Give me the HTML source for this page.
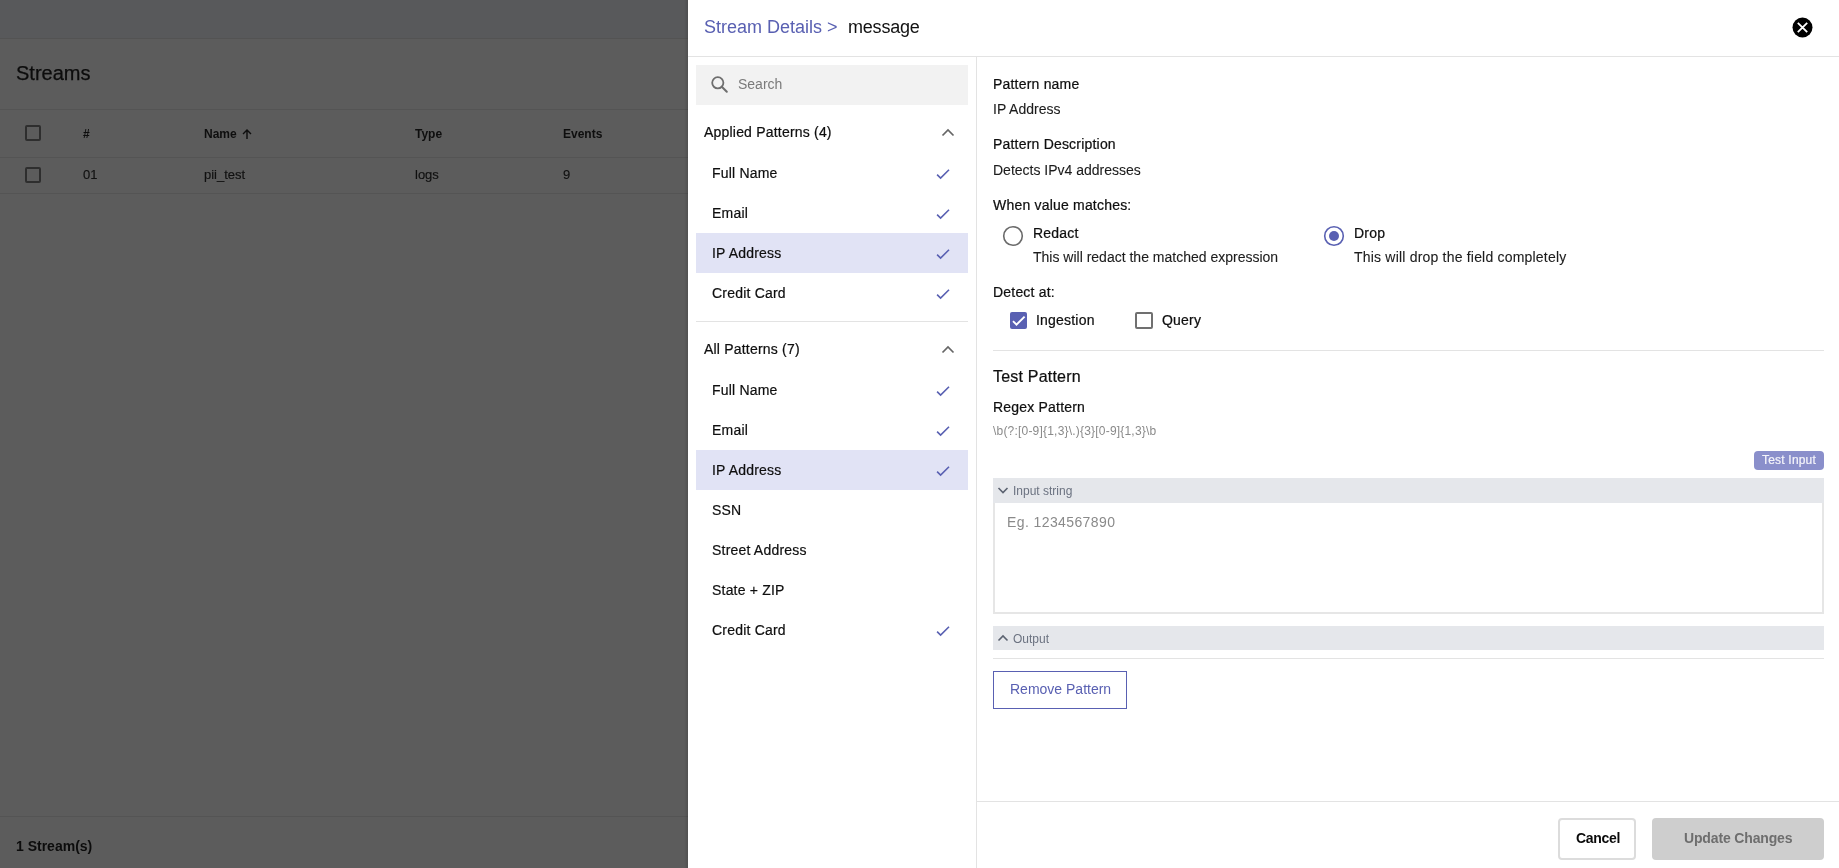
<!DOCTYPE html>
<html><head><meta charset="utf-8">
<style>
*{box-sizing:border-box;margin:0;padding:0}
html,body{-webkit-font-smoothing:antialiased;width:1839px;height:868px;overflow:hidden;background:#5c5c5c;font-family:"Liberation Sans",sans-serif;color:#000}
.a{position:absolute;white-space:pre}
.t14{font-size:14px;line-height:14px}
.t12{font-size:12px;line-height:12px}
.t13{font-size:13px;line-height:13px}
.ln{position:absolute;height:1px}
.sb{-webkit-text-stroke:0.22px currentColor;letter-spacing:0.2px}
.md{-webkit-text-stroke:0.2px currentColor;letter-spacing:0.2px}
#left{position:absolute;left:0;top:0;width:688px;height:868px;background:#5c5c5c;overflow:hidden}
#drawer{position:absolute;left:688px;top:0;width:1151px;height:868px;background:#fff}
</style></head><body><div id="root" style="position:absolute;left:0;top:0;width:1839px;height:868px;will-change:transform">
<div id="left">
  <div class="a" style="left:0;top:0;width:688px;height:38px;background:#58595b"></div>
  <div class="ln" style="left:0;top:38px;width:688px;background:#535353"></div>
  <div class="a" style="left:16px;top:63px;font-size:20px;line-height:20px;color:#0c0c0c;-webkit-text-stroke:0.25px #0c0c0c">Streams</div>
  <div class="ln" style="left:0;top:109px;width:688px;background:#545454"></div>
  <div class="a" style="left:25px;top:125px;width:16px;height:16px;border:2px solid #2e2e2e;border-radius:2px"></div>
  <div class="a t12" style="left:83px;top:128px;font-weight:bold;color:#0e0e0e">#</div>
  <div class="a t12" style="left:204px;top:128px;font-weight:bold;color:#0e0e0e">Name</div>
  <svg class="a" style="left:241px;top:128px" width="12" height="12" viewBox="0 0 12 12"><path d="M6 11V2M2 6l4-4 4 4" stroke="#0e0e0e" stroke-width="1.4" fill="none"/></svg>
  <div class="a t12" style="left:415px;top:128px;font-weight:bold;color:#0e0e0e">Type</div>
  <div class="a t12" style="left:563px;top:128px;font-weight:bold;color:#0e0e0e">Events</div>
  <div class="ln" style="left:0;top:157px;width:688px;background:#545454"></div>
  <div class="a" style="left:25px;top:167px;width:16px;height:16px;border:2px solid #2e2e2e;border-radius:2px"></div>
  <div class="a t13" style="left:83px;top:168px;color:#111;-webkit-text-stroke:0.15px #111">01</div>
  <div class="a t13" style="left:204px;top:168px;color:#111;-webkit-text-stroke:0.15px #111">pii_test</div>
  <div class="a t13" style="left:415px;top:168px;color:#111;-webkit-text-stroke:0.15px #111">logs</div>
  <div class="a t13" style="left:563px;top:168px;color:#111;-webkit-text-stroke:0.15px #111">9</div>
  <div class="ln" style="left:0;top:193px;width:688px;background:#545454"></div>
  <div class="ln" style="left:0;top:816px;width:688px;background:#545454"></div>
  <div class="a t14" style="left:16px;top:839px;font-weight:bold;color:#0c0c0c">1 Stream(s)</div>
  <div class="a" style="left:684px;top:0;width:4px;height:868px;background:linear-gradient(to right,rgba(0,0,0,0),rgba(0,0,0,0.12))"></div>
</div>
<div id="drawer"></div>
<!-- header -->
<div class="a" style="left:704px;top:18px;font-size:18px;line-height:18px;color:#5960b2">Stream Details &gt;</div>
<div class="a" style="left:848px;top:18px;font-size:18px;line-height:18px;color:#111;letter-spacing:-0.2px">message</div>
<svg class="a" style="left:1792px;top:17px" width="21" height="21" viewBox="0 0 21 21"><circle cx="10.5" cy="10.5" r="10" fill="#000"/><path d="M5.8 5.8l9.4 9.4M15.2 5.8l-9.4 9.4" stroke="#fff" stroke-width="1.8"/></svg>
<div class="ln" style="left:688px;top:56px;width:1151px;background:#e3e3e3"></div>
<!-- left column -->
<div class="a" style="left:976px;top:57px;width:1px;height:811px;background:#e3e3e3"></div>
<div class="a" style="left:696px;top:65px;width:272px;height:40px;background:#f2f2f2"></div>
<svg class="a" style="left:710px;top:75px" width="20" height="20" viewBox="0 0 20 20"><circle cx="7.8" cy="7.8" r="5.6" stroke="#6e6e6e" stroke-width="1.8" fill="none"/><path d="M11.8 11.8l5 5" stroke="#6e6e6e" stroke-width="2" stroke-linecap="round" fill="none"/></svg>
<div class="a t14" style="left:738px;top:77px;color:#7a7a7a">Search</div>
<div class="a t14 sb" style="left:704px;top:125px;color:#0f0f0f">Applied Patterns (4)</div>
<svg class="a" style="left:940px;top:126px" width="16" height="12" viewBox="0 0 16 12"><path d="M2.5 9.5L8 4l5.5 5.5" stroke="#666" stroke-width="1.7" fill="none"/></svg>
<div class="a t14 md" style="left:712px;top:166px;color:#0f0f0f">Full Name</div>
<svg class="a" style="left:935px;top:168px" width="16" height="12" viewBox="0 0 16 12"><path d="M2.1 6.6L5.6 10.1 14 1.7" stroke="#5960b2" stroke-width="1.6" fill="none"/></svg>
<div class="a t14 md" style="left:712px;top:206px;color:#0f0f0f">Email</div>
<svg class="a" style="left:935px;top:208px" width="16" height="12" viewBox="0 0 16 12"><path d="M2.1 6.6L5.6 10.1 14 1.7" stroke="#5960b2" stroke-width="1.6" fill="none"/></svg>
<div class="a" style="left:696px;top:233px;width:272px;height:40px;background:#e1e3f5"></div>
<div class="a t14 md" style="left:712px;top:246px;color:#0f0f0f">IP Address</div>
<svg class="a" style="left:935px;top:248px" width="16" height="12" viewBox="0 0 16 12"><path d="M2.1 6.6L5.6 10.1 14 1.7" stroke="#5960b2" stroke-width="1.6" fill="none"/></svg>
<div class="a t14 md" style="left:712px;top:286px;color:#0f0f0f">Credit Card</div>
<svg class="a" style="left:935px;top:288px" width="16" height="12" viewBox="0 0 16 12"><path d="M2.1 6.6L5.6 10.1 14 1.7" stroke="#5960b2" stroke-width="1.6" fill="none"/></svg>
<div class="ln" style="left:696px;top:321px;width:272px;background:#e3e3e3"></div>
<div class="a t14 sb" style="left:704px;top:342px;color:#0f0f0f">All Patterns (7)</div>
<svg class="a" style="left:940px;top:343px" width="16" height="12" viewBox="0 0 16 12"><path d="M2.5 9.5L8 4l5.5 5.5" stroke="#666" stroke-width="1.7" fill="none"/></svg>
<div class="a t14 md" style="left:712px;top:383px;color:#0f0f0f">Full Name</div>
<svg class="a" style="left:935px;top:385px" width="16" height="12" viewBox="0 0 16 12"><path d="M2.1 6.6L5.6 10.1 14 1.7" stroke="#5960b2" stroke-width="1.6" fill="none"/></svg>
<div class="a t14 md" style="left:712px;top:423px;color:#0f0f0f">Email</div>
<svg class="a" style="left:935px;top:425px" width="16" height="12" viewBox="0 0 16 12"><path d="M2.1 6.6L5.6 10.1 14 1.7" stroke="#5960b2" stroke-width="1.6" fill="none"/></svg>
<div class="a" style="left:696px;top:450px;width:272px;height:40px;background:#e1e3f5"></div>
<div class="a t14 md" style="left:712px;top:463px;color:#0f0f0f">IP Address</div>
<svg class="a" style="left:935px;top:465px" width="16" height="12" viewBox="0 0 16 12"><path d="M2.1 6.6L5.6 10.1 14 1.7" stroke="#5960b2" stroke-width="1.6" fill="none"/></svg>
<div class="a t14 md" style="left:712px;top:503px;color:#0f0f0f">SSN</div>
<div class="a t14 md" style="left:712px;top:543px;color:#0f0f0f">Street Address</div>
<div class="a t14 md" style="left:712px;top:583px;color:#0f0f0f">State + ZIP</div>
<div class="a t14 md" style="left:712px;top:623px;color:#0f0f0f">Credit Card</div>
<svg class="a" style="left:935px;top:625px" width="16" height="12" viewBox="0 0 16 12"><path d="M2.1 6.6L5.6 10.1 14 1.7" stroke="#5960b2" stroke-width="1.6" fill="none"/></svg>
<!-- right content -->
<div class="a t14 sb" style="left:993px;top:77px;color:#0f0f0f">Pattern name</div>
<div class="a t14" style="left:993px;top:102px;color:#1c1c1c;-webkit-text-stroke:0.1px #1c1c1c">IP Address</div>
<div class="a t14 sb" style="left:993px;top:137px;color:#0f0f0f">Pattern Description</div>
<div class="a t14" style="left:993px;top:163px;color:#1c1c1c;-webkit-text-stroke:0.1px #1c1c1c">Detects IPv4 addresses</div>
<div class="a t14 sb" style="left:993px;top:198px;color:#0f0f0f">When value matches:</div>
<svg class="a" style="left:1002px;top:225px" width="22" height="22" viewBox="0 0 22 22"><circle cx="11" cy="11" r="9.3" stroke="#6a6a6a" stroke-width="1.6" fill="none"/></svg>
<div class="a t14 sb" style="left:1033px;top:226px;color:#0f0f0f">Redact</div>
<div class="a t14" style="left:1033px;top:250px;color:#1c1c1c;-webkit-text-stroke:0.1px #1c1c1c">This will redact the matched expression</div>
<svg class="a" style="left:1323px;top:225px" width="22" height="22" viewBox="0 0 22 22"><circle cx="11" cy="11" r="9.3" stroke="#5960b2" stroke-width="1.6" fill="none"/><circle cx="11" cy="11" r="5" fill="#5960b2"/></svg>
<div class="a t14 sb" style="left:1354px;top:226px;color:#0f0f0f">Drop</div>
<div class="a t14" style="left:1354px;top:250px;color:#1c1c1c;-webkit-text-stroke:0.1px #1c1c1c;letter-spacing:0.2px">This will drop the field completely</div>
<div class="a t14 sb" style="left:993px;top:285px;color:#0f0f0f">Detect at:</div>
<div class="a" style="left:1010px;top:312px;width:17px;height:17px;background:#5960b2;border-radius:2px"></div>
<svg class="a" style="left:1010px;top:312px" width="17" height="17" viewBox="0 0 17 17"><path d="M3 9.2L6.5 12.7 14.6 4.6" stroke="#fff" stroke-width="1.9" fill="none"/></svg>
<div class="a t14 sb" style="left:1036px;top:313px;color:#0f0f0f">Ingestion</div>
<div class="a" style="left:1135px;top:312px;width:18px;height:17px;border:2px solid #707070;border-radius:2px"></div>
<div class="a t14 sb" style="left:1162px;top:313px;color:#0f0f0f">Query</div>
<div class="ln" style="left:993px;top:350px;width:831px;background:#e3e3e3"></div>
<div class="a sb" style="left:993px;top:369px;font-size:16px;line-height:16px;color:#0f0f0f">Test Pattern</div>
<div class="a t14 sb" style="left:993px;top:400px;color:#0f0f0f">Regex Pattern</div>
<div class="a t12" style="left:993px;top:425px;color:#8a8a8a;letter-spacing:0.2px">\b(?:[0-9]{1,3}\.){3}[0-9]{1,3}\b</div>
<div class="a" style="left:1754px;top:451px;width:70px;height:19px;background:#8a8fcb;border-radius:4px"></div>
<div class="a t12 sb" style="left:1762px;top:454px;color:#f4f4fa">Test Input</div>
<div class="a" style="left:993px;top:478px;width:831px;height:25px;background:#e5e7eb"></div>
<svg class="a" style="left:996px;top:484px" width="14" height="12" viewBox="0 0 14 12"><path d="M2.5 4l4.5 4.5L11.5 4" stroke="#5b6270" stroke-width="1.6" fill="none"/></svg>
<div class="a t12" style="left:1013px;top:485px;color:#6b7280">Input string</div>
<div class="a" style="left:993px;top:503px;width:831px;height:111px;border:2px solid #e6e6e6;border-top:none"></div>
<div class="a t14" style="left:1007px;top:515px;color:#8a8a8a;letter-spacing:0.4px">Eg. 1234567890</div>
<div class="a" style="left:993px;top:626px;width:831px;height:24px;background:#e5e7eb"></div>
<svg class="a" style="left:996px;top:632px" width="14" height="12" viewBox="0 0 14 12"><path d="M2.5 8.5L7 4l4.5 4.5" stroke="#5b6270" stroke-width="1.6" fill="none"/></svg>
<div class="a t12" style="left:1013px;top:633px;color:#6b7280">Output</div>
<div class="ln" style="left:993px;top:658px;width:831px;background:#e3e3e3"></div>
<div class="a" style="left:993px;top:671px;width:134px;height:38px;border:1px solid #5960b2"></div>
<div class="a t14" style="left:1010px;top:682px;color:#5960b2">Remove Pattern</div>
<!-- footer -->
<div class="ln" style="left:977px;top:801px;width:862px;background:#e3e3e3"></div>
<div class="a" style="left:1558px;top:818px;width:78px;height:42px;border:2px solid #dcdcdc;border-radius:4px"></div>
<div class="a t14" style="left:1576px;top:831px;font-weight:bold;color:#0a0a0a;letter-spacing:-0.3px">Cancel</div>
<div class="a" style="left:1652px;top:818px;width:172px;height:42px;background:#cecece;border-radius:4px"></div>
<div class="a t14" style="left:1684px;top:831px;font-weight:bold;color:#6e6e6e;letter-spacing:-0.15px">Update Changes</div>

</div></body></html>
